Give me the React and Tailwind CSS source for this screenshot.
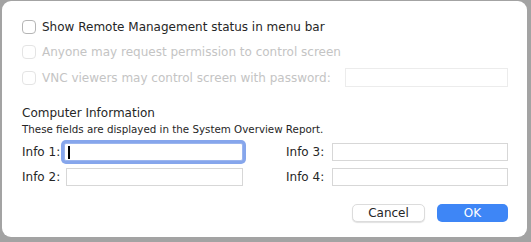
import React from "react";

function Check({ disabled }) {
  return (
    <span
      className={
        "inline-block w-[14px] h-[14px] rounded-[4px] border bg-white shrink-0 " +
        (disabled ? "border-[#e4e4e4]" : "border-[#b5b5b5]")
      }
    />
  );
}

function Field({ className = "", focused }) {
  return (
    <div
      className={
        "h-[18px] bg-white " +
        (focused
          ? "border border-[#9bb5ee] ring-[3px] ring-[#86a6ec] rounded-[2px] flex items-center pl-[3px]"
          : "border border-[#d7d7d7]") +
        " " +
        className
      }
    >
      {focused && <span className="w-[2px] h-[13px] bg-black" />}
    </div>
  );
}

export default function App() {
  return (
    <div
      className="w-[531px] h-[242px] bg-[#a3a3a3] pl-[2px] pt-[1px] pr-[4px] pb-[5px]"
      style={{ fontFamily: '"DejaVu Sans", Verdana, sans-serif' }}
    >
      <div className="w-full h-full bg-white rounded-[9px] pl-[20px] pr-[19px] pt-[17px] text-[#262626] text-[12px]">
        <div className="flex items-center gap-[6px] h-[17px]">
          <Check />
          <span>Show Remote Management status in menu bar</span>
        </div>
        <div className="flex items-center gap-[6px] h-[17px] mt-[8px] text-[#c4c4c4]">
          <Check disabled />
          <span>Anyone may request permission to control screen</span>
        </div>
        <div className="flex items-center gap-[6px] h-[19px] mt-[8px] text-[#c4c4c4]">
          <Check disabled />
          <span>VNC viewers may control screen with password:</span>
          <div className="ml-auto w-[163px] h-[19px] border border-[#ececec]" />
        </div>
        <div className="mt-[18px] leading-[16px]">Computer Information</div>
        <div className="mt-[2px] text-[10.3px] leading-[13px]">
          These fields are displayed in the System Overview Report.
        </div>
        <div className="grid grid-cols-[221px_1fr] mt-[7px]">
          <div className="flex flex-col gap-[7px]">
            <div className="flex items-center h-[18px]">
              <span className="w-[42px]">Info 1:</span>
              <Field focused className="w-[179px]" />
            </div>
            <div className="flex items-center h-[18px]">
              <span className="w-[44px]">Info 2:</span>
              <Field className="w-[177px]" />
            </div>
          </div>
          <div className="flex flex-col gap-[7px] pl-[43px]">
            <div className="flex items-center h-[18px]">
              <span className="w-[46px]">Info 3:</span>
              <Field className="flex-1" />
            </div>
            <div className="flex items-center h-[18px]">
              <span className="w-[46px]">Info 4:</span>
              <Field className="flex-1" />
            </div>
          </div>
        </div>
        <div className="flex justify-end gap-[12px] mt-[18px]">
          <button className="w-[73px] h-[18px] rounded-[5px] bg-white border border-[#dcdcdc] shadow-[0_1px_1px_rgba(0,0,0,0.12)] text-[12px] leading-none text-[#262626]">
            Cancel
          </button>
          <button className="w-[71px] h-[18px] rounded-[5px] bg-[#3e86f6] text-white text-[12px] leading-none">
            OK
          </button>
        </div>
      </div>
    </div>
  );
}
